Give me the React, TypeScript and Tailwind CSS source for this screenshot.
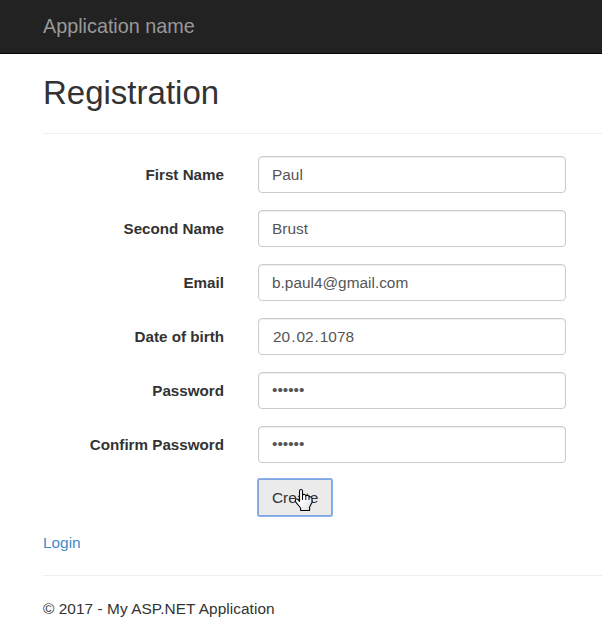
import type { InputHTMLAttributes, ReactNode } from "react";

const control =
  "block h-[37px] w-[308px] rounded-[4px] border border-[#ccc] bg-white px-[13px] text-[15.4px] leading-[35px] text-[#555] shadow-[inset_0_1px_1px_rgba(0,0,0,0.075)] outline-none";

function Row({ label, children }: { label: string; children: ReactNode }) {
  return (
    <div className="mb-[17px] flex h-[37px] items-center">
      <label className="mr-[34px] w-[181px] text-right text-[15.2px] font-bold">{label}</label>
      {children}
    </div>
  );
}

function Field({ label, ...props }: { label: string } & InputHTMLAttributes<HTMLInputElement>) {
  return (
    <Row label={label}>
      <input className={`${control} ${props.type === "password" ? "pb-[2px]" : ""}`} {...props} />
    </Row>
  );
}

function HandCursor() {
  return (
    <svg className="absolute left-[37px] top-[10px]" width="20" height="24" viewBox="0 0 20 24">
      <defs>
        <linearGradient id="hand" x1="0" y1="0" x2="1" y2="1">
          <stop offset="0.5" stopColor="#fff" />
          <stop offset="1" stopColor="#d8d8d8" />
        </linearGradient>
      </defs>
      <path
        d="M5.5 13.5V3Q5.5 1.5 7 1.5T8.5 3V7Q9.4 6.2 10.6 6.5 11.7 6.8 11.8 7.8 12.8 7.1 13.8 7.5 14.9 7.9 15 8.8 16 8.4 17 9.1 18 9.8 18 11V14.5L15.6 19V22.5H6.6V20L2.2 14.6Q.8 12.6 1.8 11.4 3.2 10.4 4.3 12Z"
        fill="url(#hand)"
        stroke="#000814"
        strokeWidth="1.1"
        strokeLinejoin="round"
      />
      <path d="M8.5 7V12M11.8 8V12M15 9V12" fill="none" stroke="#000814" />
    </svg>
  );
}

export default function App() {
  return (
    <div className="h-[639px] w-full overflow-hidden bg-white font-['Liberation_Sans',Arial,sans-serif] text-[15.4px] leading-[22px] text-[#333]">
      <header className="flex h-[54px] items-center border-b border-[#080808] bg-[#222] pb-[2px] pl-[43px] text-[19.8px] text-[#999]">
        <a href="#">Application name</a>
      </header>
      <main className="ml-[43px]">
        <h2 className="pt-[21px] text-[33px] leading-[36px]">Registration</h2>
        <hr className="mt-[22px] mb-[22px] border-[#eee]" />
        <form>
          <Field label="First Name" defaultValue="Paul" />
          <Field label="Second Name" defaultValue="Brust" />
          <Field label="Email" defaultValue="b.paul4@gmail.com" />
          <Row label="Date of birth">
            <div className={control}>
              <span className="px-px">20</span>.<span className="px-px">02</span>.<span className="px-px">1078</span>
            </div>
          </Row>
          <Field label="Password" type="password" defaultValue="123456" />
          <Field label="Confirm Password" type="password" defaultValue="123456" />
          <div className="relative -mt-[2px] ml-[214px] h-[39px] w-[76px]">
            <button
              type="button"
              className="h-[39px] w-[76px] rounded-[2px] border border-[#8ab4f8] bg-[#ebebeb] pl-[14px] text-left shadow-[inset_0_0_0_1px_#83a5d9]"
            >
              Create
            </button>
            <HandCursor />
          </div>
        </form>
        <a href="#" className="mt-[15px] block text-[#428bca]">Login</a>
        <hr className="mt-[21px] mb-[22px] border-[#eee]" />
        <footer className="tracking-[0.06px]">© 2017 - My ASP.NET Application</footer>
      </main>
    </div>
  );
}
